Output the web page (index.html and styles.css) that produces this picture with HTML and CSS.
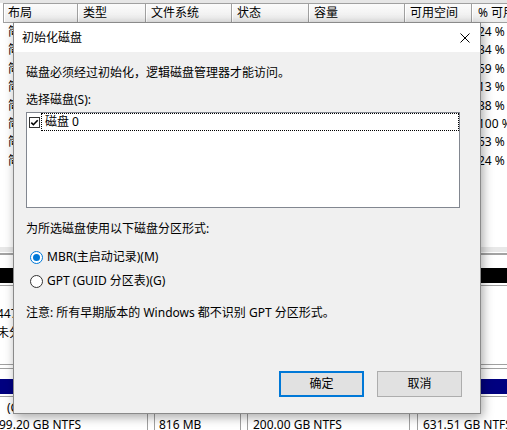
FILE: index.html
```html
<!DOCTYPE html>
<html lang="zh-CN">
<head>
<meta charset="utf-8">
<title>初始化磁盘</title>
<link rel="stylesheet" href="styles.css">
</head>
<body>
<div class="app">
  <div class="topstrip"></div>
  <div class="grid header">
    <div class="cell c1">布局</div><div class="cell">类型</div><div class="cell">文件系统</div><div class="cell">状态</div><div class="cell">容量</div><div class="cell">可用空间</div><div class="cell c7">% 可用</div>
  </div>
  <div class="rows">
    <div class="grid row"><div class="cell c1">简单</div><div class="cell"></div><div class="cell"></div><div class="cell"></div><div class="cell"></div><div class="cell"></div><div class="cell c7">24 %</div></div>
    <div class="grid row"><div class="cell c1">简单</div><div class="cell"></div><div class="cell"></div><div class="cell"></div><div class="cell"></div><div class="cell"></div><div class="cell c7">34 %</div></div>
    <div class="grid row"><div class="cell c1">简单</div><div class="cell"></div><div class="cell"></div><div class="cell"></div><div class="cell"></div><div class="cell"></div><div class="cell c7">59 %</div></div>
    <div class="grid row"><div class="cell c1">简单</div><div class="cell"></div><div class="cell"></div><div class="cell"></div><div class="cell"></div><div class="cell"></div><div class="cell c7">13 %</div></div>
    <div class="grid row"><div class="cell c1">简单</div><div class="cell"></div><div class="cell"></div><div class="cell"></div><div class="cell"></div><div class="cell"></div><div class="cell c7">38 %</div></div>
    <div class="grid row"><div class="cell c1">简单</div><div class="cell"></div><div class="cell"></div><div class="cell"></div><div class="cell"></div><div class="cell"></div><div class="cell c7">100 %</div></div>
    <div class="grid row"><div class="cell c1">简单</div><div class="cell"></div><div class="cell"></div><div class="cell"></div><div class="cell"></div><div class="cell"></div><div class="cell c7">53 %</div></div>
    <div class="grid row"><div class="cell c1">简单</div><div class="cell"></div><div class="cell"></div><div class="cell"></div><div class="cell"></div><div class="cell"></div><div class="cell c7">24 %</div></div>
  </div>
  <div class="splitter"></div>
  <div class="graph">
    <div class="disk disk1">
      <div class="bar bar-unalloc"></div>
      <div class="parts">
        <div class="part-unalloc">
          <div class="pline">447.13 GB</div>
          <div class="pline">未分配</div>
        </div>
      </div>
    </div>
    <div class="disk disk0">
      <div class="bar bar-primary"></div>
      <div class="parts parts0">
        <div class="part p1"><div class="pline vol">(C:)</div><div class="pline">99.20 GB NTFS</div></div>
        <div class="part p2"><div class="pline vol">&nbsp;</div><div class="pline">816 MB</div></div>
        <div class="part p3"><div class="pline vol">(D:)</div><div class="pline">200.00 GB NTFS</div></div>
        <div class="part p4"><div class="pline vol">(E:)</div><div class="pline">631.51 GB NTFS</div></div>
      </div>
    </div>
  </div>
</div>

<div class="dialog">
  <div class="titlebar">
    <span class="title">初始化磁盘</span>
    <svg class="close" width="10" height="10" viewBox="0 0 10 10"><path d="M0.5 0.5 L9.5 9.5 M9.5 0.5 L0.5 9.5" stroke="#000" stroke-width="1" fill="none"/></svg>
  </div>
  <div class="dbody">
    <p class="line intro">磁盘必须经过初始化，逻辑磁盘管理器才能访问。</p>
    <p class="line select-label">选择磁盘(S):</p>
    <div class="listbox">
      <div class="item">
        <svg class="check" width="11" height="11" viewBox="0 0 11 11"><rect x="0.5" y="0.5" width="10" height="10" fill="#fff" stroke="#333"/><path d="M2.3 5.6 L4.4 7.7 L8.7 3.2" stroke="#000" stroke-width="1.6" fill="none"/></svg>
        <span class="item-text">磁盘 0</span>
      </div>
    </div>
    <p class="line style-label">为所选磁盘使用以下磁盘分区形式:</p>
    <div class="radio r1"><span class="dot on"></span><span class="rtext">MBR(主启动记录)(M)</span></div>
    <div class="radio r2"><span class="dot"></span><span class="rtext">GPT (GUID 分区表)(G)</span></div>
    <p class="line note">注意: 所有早期版本的 Windows 都不识别 GPT 分区形式。</p>
    <div class="buttons">
      <button class="btn btn-default">确定</button>
      <button class="btn">取消</button>
    </div>
  </div>
</div>
</body>
</html>
```

FILE: styles.css
```css
* { box-sizing: border-box; }
html, body { margin: 0; padding: 0; }
body {
  width: 507px;
  height: 430px;
  overflow: hidden;
  background: #fff;
  font-family: "Noto Sans", "Noto Sans CJK SC", sans-serif;
  font-size: 12px;
  color: #000;
  position: relative;
}
.app {
  width: 507px;
  height: 430px;
  overflow: hidden;
  background: #fff;
}
.topstrip {
  height: 3px;
  background: #e6e6e6;
}
.grid {
  display: grid;
  grid-template-columns: 74px 68px 86px 77px 96px 67px 1fr;
  margin-left: 3px;
}
.header {
  height: 20px;
  border-top: 1px solid #a0a0a0;
  border-bottom: 1px solid #a0a0a0;
  border-left: 1px solid #a0a0a0;
  background: linear-gradient(#fbfbfb, #ececec);
}
.header .cell {
  border-right: 1px solid #a0a0a0;
  box-shadow: inset 1px 0 0 #fff;
  padding-left: 5px;
  line-height: 18px;
  white-space: nowrap;
  overflow: hidden;
}
.header .c1 { padding-left: 4px; }
.header .c7 { border-right: none; padding-left: 6px; }
.rows {
  height: 223px;
  padding-left: 1px;
}
.row .cell {
  height: 18.4px;
  line-height: 18.4px;
  padding-left: 5px;
  white-space: nowrap;
  overflow: hidden;
}
.row .c1 { padding-left: 4px; }
.row .c7 { padding-left: 6px; overflow: visible; }
.splitter {
  height: 10px;
  background: linear-gradient(#fff 0, #fff 1px, #e8e8e8 1px, #e8e8e8 6px, #fff 6px, #fff 7px, #a3a3a3 7px, #a3a3a3 9px, #fff 9px);
}
.graph {
  background: #fff;
}
.disk1 {
  height: 109px;
  padding-top: 12px;
  border-bottom: 1px solid #a0a0a0;
}
.bar {
  height: 15px;
}
.bar-unalloc { background: #000; }
.bar-primary { background: #000080; }
.parts {
  margin-top: 2px;
  border-top: 1px solid #a0a0a0;
  display: flex;
}
.pline {
  line-height: 19px;
  white-space: nowrap;
}
.part-unalloc {
  padding-top: 18px;
  margin-left: -3px;
}
.disk0 {
  margin-top: 3px;
  border-top: 1px solid #a0a0a0;
  padding-top: 10px;
}
.parts0 {
  gap: 6px;
  height: 40px;
}
.parts0 .pline { line-height: 17px; }
.parts0 .vol { padding-left: 8px; }
.parts0 .part {
  padding-top: 2px;
  border-left: 1px solid #a0a0a0;
  border-right: 1px solid #a0a0a0;
  padding-left: 4px;
}
.p1 { width: 154px; margin-left: -6px; }
.p2 { width: 87px; }
.parts0 .p3 { width: 163px; padding-left: 5px; }
.parts0 .p4 { flex: 1; margin-left: 1px; padding-left: 5px; border-right: none; overflow: hidden; }

/* dialog window */
.dialog {
  position: absolute;
  left: 13px;
  top: 22px;
  width: 468px;
  height: 392px;
  border: 1px solid #8a8a8a;
  background: #f0f0f0;
  box-shadow: 2px 3px 10px rgba(0, 0, 0, 0.35);
  font-family: "Noto Sans", "Noto Sans CJK SC", sans-serif;
  font-size: 12px;
}
.titlebar {
  height: 29px;
  background: #fff;
  display: flex;
  align-items: center;
  justify-content: space-between;
  padding-left: 8px;
  padding-right: 10px;
}
.title { line-height: 16px; }
.close { display: block; }
.dbody {
  padding: 13px 0 0 12px;
}
.line {
  margin: 0;
  line-height: 16px;
  white-space: nowrap;
}
.select-label { margin-top: 11px; }
.listbox {
  margin-top: 4px;
  width: 434px;
  height: 96px;
  border: 1px solid #828790;
  background: #fff;
}
.item {
  display: flex;
  align-items: center;
  height: 18px;
  padding-left: 2px;
}
.check { display: block; flex: none; margin-right: 1px; }
.item-text {
  flex: 1;
  height: 18px;
  border: 1px dotted #000;
  padding-left: 3px;
  line-height: 16px;
}
.style-label { margin-top: 13px; }
.radio {
  display: flex;
  align-items: center;
  height: 16px;
  padding-left: 4px;
  line-height: 16px;
  white-space: nowrap;
}
.r1 { margin-top: 12px; }
.r2 { margin-top: 8px; }
.dot {
  width: 13px;
  height: 13px;
  border-radius: 50%;
  border: 1px solid #333;
  background: #fff;
  margin-right: 4px;
  flex: none;
  display: flex;
  align-items: center;
  justify-content: center;
}
.dot.on { border-color: #0078d7; }
.dot.on::after {
  content: "";
  width: 7px;
  height: 7px;
  border-radius: 50%;
  background: #0078d7;
}
.note { margin-top: 16px; }
.buttons {
  margin-top: 50px;
  margin-right: 18px;
  display: flex;
  justify-content: flex-end;
  gap: 13px;
}
.btn {
  width: 85px;
  height: 26px;
  background: #e1e1e1;
  border: 1px solid #adadad;
  font-family: "Noto Sans", "Noto Sans CJK SC", sans-serif;
  font-size: 12px;
  color: #000;
  padding: 0;
  line-height: 16px;
}
.btn-default {
  border: 2px solid #0078d7;
}
```
